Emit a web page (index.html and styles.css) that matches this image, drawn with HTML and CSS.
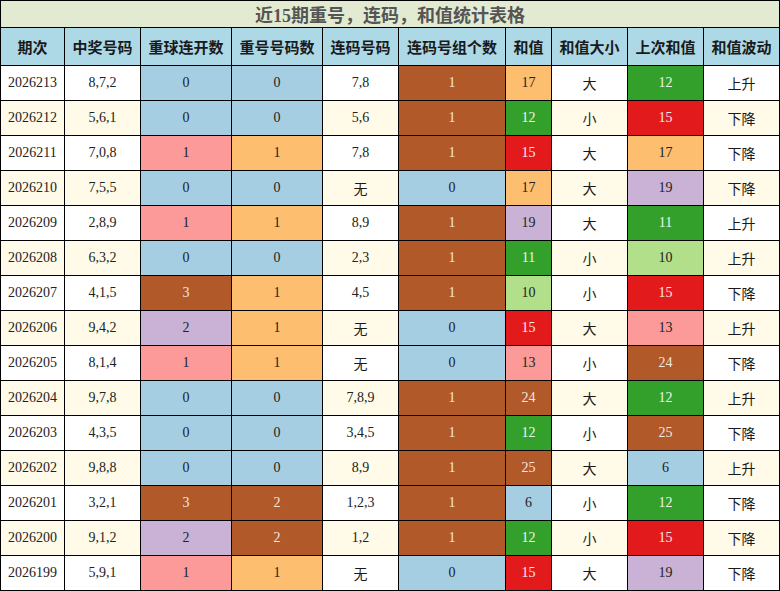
FILE: index.html
```html
<!DOCTYPE html>
<html lang="zh">
<head>
<meta charset="utf-8">
<title>近15期重号，连码，和值统计表格</title>
<link rel="stylesheet" href="styles.css">
</head>
<body>
<div class="sheet">
  <div class="title">近15期重号，连码，和值统计表格</div>
  <div class="row head">
    <div>期次</div><div>中奖号码</div><div>重球连开数</div><div>重号号码数</div><div>连码号码</div><div>连码号组个数</div><div>和值</div><div>和值大小</div><div>上次和值</div><div>和值波动</div>
  </div>
  <div class="row">
    <div>2026213</div><div>8,7,2</div><div class="c-blue">0</div><div class="c-blue">0</div><div>7,8</div><div class="c-brown">1</div><div class="c-orange">17</div><div class="cjk">大</div><div class="c-green">12</div><div class="cjk">上升</div>
  </div>
  <div class="row alt">
    <div>2026212</div><div>5,6,1</div><div class="c-blue">0</div><div class="c-blue">0</div><div>5,6</div><div class="c-brown">1</div><div class="c-green">12</div><div class="cjk">小</div><div class="c-red">15</div><div class="cjk">下降</div>
  </div>
  <div class="row">
    <div>2026211</div><div>7,0,8</div><div class="c-pink">1</div><div class="c-orange">1</div><div>7,8</div><div class="c-brown">1</div><div class="c-red">15</div><div class="cjk">大</div><div class="c-orange">17</div><div class="cjk">下降</div>
  </div>
  <div class="row alt">
    <div>2026210</div><div>7,5,5</div><div class="c-blue">0</div><div class="c-blue">0</div><div class="cjk">无</div><div class="c-blue">0</div><div class="c-orange">17</div><div class="cjk">大</div><div class="c-purple">19</div><div class="cjk">下降</div>
  </div>
  <div class="row">
    <div>2026209</div><div>2,8,9</div><div class="c-pink">1</div><div class="c-orange">1</div><div>8,9</div><div class="c-brown">1</div><div class="c-purple">19</div><div class="cjk">大</div><div class="c-green">11</div><div class="cjk">上升</div>
  </div>
  <div class="row alt">
    <div>2026208</div><div>6,3,2</div><div class="c-blue">0</div><div class="c-blue">0</div><div>2,3</div><div class="c-brown">1</div><div class="c-green">11</div><div class="cjk">小</div><div class="c-lime">10</div><div class="cjk">上升</div>
  </div>
  <div class="row">
    <div>2026207</div><div>4,1,5</div><div class="c-brown">3</div><div class="c-orange">1</div><div>4,5</div><div class="c-brown">1</div><div class="c-lime">10</div><div class="cjk">小</div><div class="c-red">15</div><div class="cjk">下降</div>
  </div>
  <div class="row alt">
    <div>2026206</div><div>9,4,2</div><div class="c-purple">2</div><div class="c-orange">1</div><div class="cjk">无</div><div class="c-blue">0</div><div class="c-red">15</div><div class="cjk">大</div><div class="c-pink">13</div><div class="cjk">上升</div>
  </div>
  <div class="row">
    <div>2026205</div><div>8,1,4</div><div class="c-pink">1</div><div class="c-orange">1</div><div class="cjk">无</div><div class="c-blue">0</div><div class="c-pink">13</div><div class="cjk">小</div><div class="c-brown">24</div><div class="cjk">下降</div>
  </div>
  <div class="row alt">
    <div>2026204</div><div>9,7,8</div><div class="c-blue">0</div><div class="c-blue">0</div><div>7,8,9</div><div class="c-brown">1</div><div class="c-brown">24</div><div class="cjk">大</div><div class="c-green">12</div><div class="cjk">上升</div>
  </div>
  <div class="row">
    <div>2026203</div><div>4,3,5</div><div class="c-blue">0</div><div class="c-blue">0</div><div>3,4,5</div><div class="c-brown">1</div><div class="c-green">12</div><div class="cjk">小</div><div class="c-brown">25</div><div class="cjk">下降</div>
  </div>
  <div class="row alt">
    <div>2026202</div><div>9,8,8</div><div class="c-blue">0</div><div class="c-blue">0</div><div>8,9</div><div class="c-brown">1</div><div class="c-brown">25</div><div class="cjk">大</div><div class="c-blue">6</div><div class="cjk">上升</div>
  </div>
  <div class="row">
    <div>2026201</div><div>3,2,1</div><div class="c-brown">3</div><div class="c-brown">2</div><div>1,2,3</div><div class="c-brown">1</div><div class="c-blue">6</div><div class="cjk">小</div><div class="c-green">12</div><div class="cjk">下降</div>
  </div>
  <div class="row alt">
    <div>2026200</div><div>9,1,2</div><div class="c-purple">2</div><div class="c-brown">2</div><div>1,2</div><div class="c-brown">1</div><div class="c-green">12</div><div class="cjk">小</div><div class="c-red">15</div><div class="cjk">下降</div>
  </div>
  <div class="row">
    <div>2026199</div><div>5,9,1</div><div class="c-pink">1</div><div class="c-orange">1</div><div class="cjk">无</div><div class="c-blue">0</div><div class="c-red">15</div><div class="cjk">大</div><div class="c-purple">19</div><div class="cjk">下降</div>
  </div>
</div>
</body>
</html>
```
FILE: styles.css
```css
html, body {
  margin: 0;
  padding: 0;
  background: #ffffff;
}

.sheet {
  width: 780px;
  box-sizing: border-box;
  display: grid;
  grid-template-columns: 63px 75px 90px 90px 75px 106px 45px 75px 75px 75px;
  grid-template-rows: 26px 37px repeat(15, 34px);
  gap: 1px;
  padding: 1px;
  background: #000000;
  font-family: "Liberation Serif", "Noto Sans CJK SC", serif;
  font-size: 14px;
  color: #222222;
}

.title {
  grid-column: 1 / -1;
  background: #e2ebd1;
  color: #555555;
  font-family: "Liberation Serif", "Noto Sans CJK SC", serif;
  font-weight: bold;
  font-size: 18px;
  display: flex;
  align-items: center;
  justify-content: center;
}

.row {
  display: contents;
}

.row > div {
  background: #ffffff;
  display: flex;
  align-items: center;
  justify-content: center;
}

.row.alt > div {
  background: #fffbe8;
}

.row.head > div {
  background: #add8e6;
  font-family: "Noto Sans CJK SC", sans-serif;
  font-weight: bold;
  font-size: 15px;
  color: #1a1a1a;
}

.row > div.cjk {
  font-family: "Noto Sans CJK SC", sans-serif;
  font-size: 14px;
  color: #1a1a1a;
}

.row > div.c-blue { background: #a6cee3; }
.row > div.c-pink { background: #fb9a99; }
.row > div.c-orange { background: #fdbf6f; }
.row > div.c-purple { background: #cab2d6; }
.row > div.c-lime { background: #b2df8a; }
.row > div.c-brown { background: #b15928; color: #f2e8e0; }
.row > div.c-green { background: #33a02c; color: #eef6ee; }
.row > div.c-red { background: #e31a1c; color: #fbecec; }
```
